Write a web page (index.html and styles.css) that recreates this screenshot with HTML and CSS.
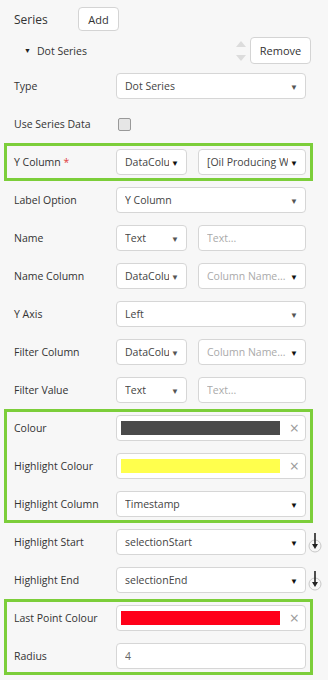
FILE: index.html
```html
<!DOCTYPE html>
<html>
<head>
<meta name="viewport" content="width=device-width, initial-scale=1">
<link rel="stylesheet" href="styles.css">
</head>
<body>
<div class="panel">
  <!-- Series heading with add button -->
  <div class="head">
    <span class="head-label">Series</span>
    <button class="btn btn-add">Add</button>
  </div>

  <!-- Collapsible series title -->
  <div class="series-bar">
    <span class="caret">&#9660;</span>
    <span class="series-name">Dot Series</span>
    <span class="sorter">
      <span class="sort-up"></span>
      <span class="sort-down"></span>
    </span>
    <button class="btn btn-remove">Remove</button>
  </div>

  <div class="row">
    <span class="label">Type</span>
    <div class="field"><span class="val">Dot Series</span><span class="arrow grey">&#9660;</span></div>
  </div>

  <div class="row">
    <span class="label">Use Series Data</span>
    <div><span class="check"></span></div>
  </div>

  <div class="group">
    <div class="row">
      <span class="label">Y Column <span class="req">*</span></span>
      <div class="pair">
        <div class="field small"><span class="val">DataColu</span><span class="arrow">&#9660;</span></div>
        <div class="field wide"><span class="val">[Oil Producing Wells]</span><span class="arrow">&#9660;</span></div>
      </div>
    </div>
  </div>

  <div class="row">
    <span class="label">Label Option</span>
    <div class="field"><span class="val">Y Column</span><span class="arrow grey">&#9660;</span></div>
  </div>

  <div class="row">
    <span class="label">Name</span>
    <div class="pair">
      <div class="field small"><span class="val">Text</span><span class="arrow grey">&#9660;</span></div>
      <div class="field wide"><span class="val hint">Text...</span></div>
    </div>
  </div>

  <div class="row">
    <span class="label">Name Column</span>
    <div class="pair">
      <div class="field small"><span class="val">DataColu</span><span class="arrow grey">&#9660;</span></div>
      <div class="field wide"><span class="val hint">Column Name...</span><span class="arrow">&#9660;</span></div>
    </div>
  </div>

  <div class="row">
    <span class="label">Y Axis</span>
    <div class="field"><span class="val">Left</span><span class="arrow grey">&#9660;</span></div>
  </div>

  <div class="row">
    <span class="label">Filter Column</span>
    <div class="pair">
      <div class="field small"><span class="val">DataColu</span><span class="arrow grey">&#9660;</span></div>
      <div class="field wide"><span class="val hint">Column Name...</span><span class="arrow">&#9660;</span></div>
    </div>
  </div>

  <div class="row">
    <span class="label">Filter Value</span>
    <div class="pair">
      <div class="field small"><span class="val">Text</span><span class="arrow grey">&#9660;</span></div>
      <div class="field wide"><span class="val hint">Text...</span></div>
    </div>
  </div>

  <div class="group">
    <div class="row">
      <span class="label">Colour</span>
      <div class="field colour"><span class="swatch dark"></span><span class="clear">&#215;</span></div>
    </div>
    <div class="row">
      <span class="label">Highlight Colour</span>
      <div class="field colour"><span class="swatch yellow"></span><span class="clear">&#215;</span></div>
    </div>
    <div class="row">
      <span class="label">Highlight Column</span>
      <div class="field"><span class="val">Timestamp</span><span class="arrow">&#9660;</span></div>
    </div>
  </div>

  <div class="row">
    <span class="label">Highlight Start</span>
    <div class="with-icon">
      <div class="field"><span class="val">selectionStart</span><span class="arrow">&#9660;</span></div>
      <svg class="pin" width="14" height="26" viewBox="0 0 14 26">
        <circle cx="7" cy="16" r="6" fill="none" stroke="#c8c8c8" stroke-width="1"/>
        <line x1="7" y1="3" x2="7" y2="17" stroke="#222" stroke-width="1.6"/>
        <path d="M4 14 L7 19 L10 14 Z" fill="#222"/>
      </svg>
    </div>
  </div>

  <div class="row">
    <span class="label">Highlight End</span>
    <div class="with-icon">
      <div class="field"><span class="val">selectionEnd</span><span class="arrow">&#9660;</span></div>
      <svg class="pin" width="14" height="26" viewBox="0 0 14 26">
        <circle cx="7" cy="16" r="6" fill="none" stroke="#c8c8c8" stroke-width="1"/>
        <line x1="7" y1="3" x2="7" y2="17" stroke="#222" stroke-width="1.6"/>
        <path d="M4 14 L7 19 L10 14 Z" fill="#222"/>
      </svg>
    </div>
  </div>

  <div class="group">
    <div class="row">
      <span class="label">Last Point Colour</span>
      <div class="field colour"><span class="swatch red"></span><span class="clear">&#215;</span></div>
    </div>
    <div class="row">
      <span class="label">Radius</span>
      <div class="field"><span class="val num">4</span></div>
    </div>
  </div>
</div>
</body>
</html>
```

FILE: styles.css
```css
/* Page basics */
body {
  margin: 0;
  background-color: #f7f7f7;
  font-family: "Open Sans", Arial, sans-serif;
  font-size: 10.5px;
  color: #333;
}

.panel {
  margin: 0 15px 0 4px;
  padding-top: 7px;
}

/* Top heading row */
.head {
  display: flex;
  align-items: center;
  height: 24px;
  padding-left: 10px;
}

.head-label {
  width: 64px;
  font-size: 12px;
}

.btn {
  box-sizing: border-box;
  background-color: #fff;
  border: 1px solid #d4d4d4;
  border-radius: 4px;
  font-family: inherit;
  font-size: 11px;
  color: #333;
  padding: 0;
}

.btn-add {
  width: 41px;
  height: 24px;
}

/* Series title bar */
.series-bar {
  display: flex;
  align-items: center;
  height: 27px;
  margin-top: 6px;
  margin-bottom: 3px;
  padding-left: 20px;
  padding-right: 2px;
}

.caret {
  font-size: 7px;
  width: 13px;
  color: #222;
}

.series-name {
  flex: 1;
}

.sorter {
  display: flex;
  flex-direction: column;
  gap: 8px;
  margin-right: 4px;
}

.sort-up {
  width: 0;
  height: 0;
  border-left: 5px solid transparent;
  border-right: 5px solid transparent;
  border-bottom: 6px solid #dcdcdc;
}

.sort-down {
  width: 0;
  height: 0;
  border-left: 5px solid transparent;
  border-right: 5px solid transparent;
  border-top: 6px solid #dcdcdc;
}

.btn-remove {
  width: 61px;
  height: 27px;
}

/* Form rows */
.row {
  display: grid;
  grid-template-columns: 102px minmax(0, 1fr);
  align-items: center;
  height: 38px;
  padding: 0 7px 0 10px;
}

.req {
  color: #e0413c;
}

/* Green highlighted groups drawn inside the rows */
.group {
  box-shadow: inset 0 0 0 3px #7cce3a;
}

.field {
  box-sizing: border-box;
  display: flex;
  align-items: center;
  height: 26px;
  padding: 0 7px 0 8px;
  background-color: #fff;
  border: 1px solid #d6d6d6;
  border-radius: 4px;
  overflow: hidden;
  min-width: 0;
}

.val {
  flex: 1;
  min-width: 0;
  white-space: nowrap;
  overflow: hidden;
  color: #444;
}

.hint {
  color: #aaa;
}

.num {
  color: #666;
}

.arrow {
  flex: none;
  font-size: 8px;
  color: #111;
  margin-left: 2px;
}

.arrow.grey {
  color: #555;
}

.pair {
  display: flex;
  gap: 11px;
  min-width: 0;
}

.small {
  flex: none;
  width: 71px;
}

.wide {
  flex: 1;
}

/* Checkbox */
.check {
  display: block;
  width: 11px;
  height: 11px;
  margin-left: 2px;
  border: 1px solid #999;
  border-radius: 2px;
  background-color: #e6e6e6;
}

/* Colour pickers */
.field.colour {
  padding: 0 6px 0 4px;
}

.swatch {
  flex: 1;
  height: 14px;
  margin-right: 10px;
}

.dark {
  background-color: #4a4a4a;
}

.yellow {
  background-color: #ffff4d;
}

.red {
  background-color: #ff0019;
}

.clear {
  font-size: 16px;
  color: #9a9a9a;
  line-height: 1;
}

/* Select with the little pin icon beside it */
.with-icon {
  display: flex;
  align-items: center;
  margin-right: -16px;
  gap: 2px;
}

.with-icon .field {
  flex: 1;
}

.pin {
  flex: none;
  margin-top: 2px;
}
```
